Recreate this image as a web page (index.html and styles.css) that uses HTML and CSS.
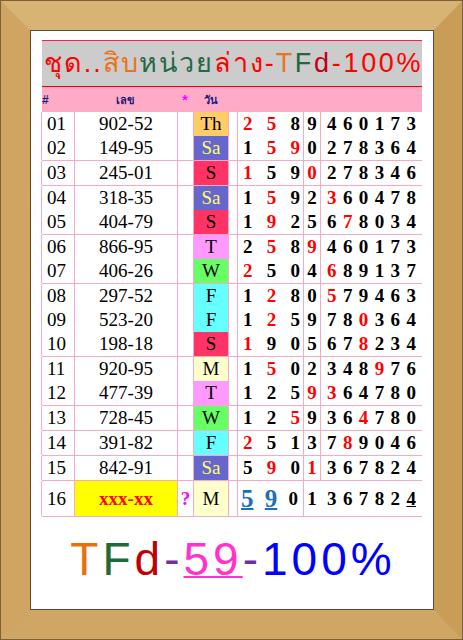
FILE: index.html
```html
<!DOCTYPE html>
<html lang="th">
<head>
<meta charset="utf-8">
<title>TFd-100%</title>
<link rel="stylesheet" href="styles.css">
</head>
<body>
<div class="frame">
  <div class="wood">
    <div class="paper">
      <div class="sheet">
        <div class="title"><span class="thai t-red">ชุด..</span><span class="thai t-orange">สิบ</span><span class="thai t-green">หน่วย</span><span class="thai t-red">ล่าง-</span><span class="t-orange">T</span><span class="t-dgreen">F</span><span class="t-dred">d</span><span class="t-red">-100</span><span class="t-red last">%</span></div>
        <div class="head">
          <span class="h-hash">#</span>
          <span class="h-num">เลข</span>
          <span class="h-star">*</span>
          <span class="h-day">วัน</span>
        </div>

        <div class="grp">
          <div class="row"><div class="c n">01</div><div class="c num">902-52</div><div class="c star"></div><div class="c day th">Th</div><div class="c gap"></div><div class="c d1"><b class="r">2</b><b class="r">5</b><b>8</b></div><div class="c d2"><b>9</b></div><div class="c d3"><b>4</b><b>6</b><b>0</b><b>1</b><b>7</b><b>3</b></div></div>
          <div class="row"><div class="c n">02</div><div class="c num">149-95</div><div class="c star"></div><div class="c day sa">Sa</div><div class="c gap"></div><div class="c d1"><b>1</b><b class="r">5</b><b class="r">9</b></div><div class="c d2"><b>0</b></div><div class="c d3"><b>2</b><b>7</b><b>8</b><b>3</b><b>6</b><b>4</b></div></div>
        </div>
        <div class="grp">
          <div class="row"><div class="c n">03</div><div class="c num">245-01</div><div class="c star"></div><div class="c day su">S</div><div class="c gap"></div><div class="c d1"><b class="r">1</b><b>5</b><b>9</b></div><div class="c d2"><b class="r">0</b></div><div class="c d3"><b>2</b><b>7</b><b>8</b><b>3</b><b>4</b><b>6</b></div></div>
        </div>
        <div class="grp">
          <div class="row"><div class="c n">04</div><div class="c num">318-35</div><div class="c star"></div><div class="c day sa">Sa</div><div class="c gap"></div><div class="c d1"><b>1</b><b class="r">5</b><b>9</b></div><div class="c d2"><b>2</b></div><div class="c d3"><b class="r">3</b><b>6</b><b>0</b><b>4</b><b>7</b><b>8</b></div></div>
          <div class="row"><div class="c n">05</div><div class="c num">404-79</div><div class="c star"></div><div class="c day su">S</div><div class="c gap"></div><div class="c d1"><b>1</b><b class="r">9</b><b>2</b></div><div class="c d2"><b>5</b></div><div class="c d3"><b>6</b><b class="r">7</b><b>8</b><b>0</b><b>3</b><b>4</b></div></div>
        </div>
        <div class="grp">
          <div class="row"><div class="c n">06</div><div class="c num">866-95</div><div class="c star"></div><div class="c day tu">T</div><div class="c gap"></div><div class="c d1"><b>2</b><b class="r">5</b><b>8</b></div><div class="c d2"><b class="r">9</b></div><div class="c d3"><b>4</b><b>6</b><b>0</b><b>1</b><b>7</b><b>3</b></div></div>
          <div class="row"><div class="c n">07</div><div class="c num">406-26</div><div class="c star"></div><div class="c day we">W</div><div class="c gap"></div><div class="c d1"><b class="r">2</b><b>5</b><b>0</b></div><div class="c d2"><b>4</b></div><div class="c d3"><b class="r">6</b><b>8</b><b>9</b><b>1</b><b>3</b><b>7</b></div></div>
        </div>
        <div class="grp">
          <div class="row"><div class="c n">08</div><div class="c num">297-52</div><div class="c star"></div><div class="c day fr">F</div><div class="c gap"></div><div class="c d1"><b>1</b><b class="r">2</b><b>8</b></div><div class="c d2"><b>0</b></div><div class="c d3"><b class="r">5</b><b>7</b><b>9</b><b>4</b><b>6</b><b>3</b></div></div>
          <div class="row"><div class="c n">09</div><div class="c num">523-20</div><div class="c star"></div><div class="c day fr">F</div><div class="c gap"></div><div class="c d1"><b>1</b><b class="r">2</b><b>5</b></div><div class="c d2"><b>9</b></div><div class="c d3"><b>7</b><b>8</b><b class="r">0</b><b>3</b><b>6</b><b>4</b></div></div>
          <div class="row"><div class="c n">10</div><div class="c num">198-18</div><div class="c star"></div><div class="c day su">S</div><div class="c gap"></div><div class="c d1"><b class="r">1</b><b>9</b><b>0</b></div><div class="c d2"><b>5</b></div><div class="c d3"><b>6</b><b>7</b><b class="r">8</b><b>2</b><b>3</b><b>4</b></div></div>
        </div>
        <div class="grp">
          <div class="row"><div class="c n">11</div><div class="c num">920-95</div><div class="c star"></div><div class="c day mo">M</div><div class="c gap"></div><div class="c d1"><b>1</b><b class="r">5</b><b>0</b></div><div class="c d2"><b>2</b></div><div class="c d3"><b>3</b><b>4</b><b>8</b><b class="r">9</b><b>7</b><b>6</b></div></div>
          <div class="row"><div class="c n">12</div><div class="c num">477-39</div><div class="c star"></div><div class="c day tu">T</div><div class="c gap"></div><div class="c d1"><b>1</b><b>2</b><b>5</b></div><div class="c d2"><b class="r">9</b></div><div class="c d3"><b class="r">3</b><b>6</b><b>4</b><b>7</b><b>8</b><b>0</b></div></div>
        </div>
        <div class="grp">
          <div class="row"><div class="c n">13</div><div class="c num">728-45</div><div class="c star"></div><div class="c day we">W</div><div class="c gap"></div><div class="c d1"><b>1</b><b>2</b><b class="r">5</b></div><div class="c d2"><b>9</b></div><div class="c d3"><b>3</b><b>6</b><b class="r">4</b><b>7</b><b>8</b><b>0</b></div></div>
        </div>
        <div class="grp">
          <div class="row"><div class="c n">14</div><div class="c num">391-82</div><div class="c star"></div><div class="c day fr">F</div><div class="c gap"></div><div class="c d1"><b class="r">2</b><b>5</b><b>1</b></div><div class="c d2"><b>3</b></div><div class="c d3"><b>7</b><b class="r">8</b><b>9</b><b>0</b><b>4</b><b>6</b></div></div>
        </div>
        <div class="grp">
          <div class="row"><div class="c n">15</div><div class="c num">842-91</div><div class="c star"></div><div class="c day sa">Sa</div><div class="c gap"></div><div class="c d1"><b>5</b><b class="r">9</b><b>0</b></div><div class="c d2"><b class="r">1</b></div><div class="c d3"><b>3</b><b>6</b><b>7</b><b>8</b><b>2</b><b>4</b></div></div>
        </div>
        <div class="grp">
          <div class="row big"><div class="c n">16</div><div class="c num yel">xxx-xx</div><div class="c star q">?</div><div class="c day mo">M</div><div class="c gap"></div><div class="c d1"><b class="blue">5</b><b class="blue">9</b><b>0</b></div><div class="c d2"><b>1</b></div><div class="c d3 nob"><b>3</b><b>6</b><b>7</b><b>8</b><b>2</b><b class="ul">4</b></div></div>
        </div>
      </div>
      <div class="footer"><span class="f-orange">T</span><span class="f-green">F</span><span class="f-red">d</span><span class="f-purple">-</span><span class="f-pink">59</span><span class="f-purple">-</span><span class="f-blue">100%</span></div>
    </div>
  </div>
</div>
</body>
</html>
```

FILE: styles.css
```css
html, body {
  margin: 0;
  padding: 0;
}
body {
  width: 463px;
  height: 640px;
  overflow: hidden;
  background: #c9a162;
}
.frame {
  box-sizing: border-box;
  width: 463px;
  height: 640px;
  border: 1px solid #7d6136;
}
.wood {
  box-sizing: border-box;
  height: 100%;
  border-style: solid;
  border-width: 29px 28px 29px 29px;
  border-color: #d8b474 #c99c58 #cfa663 #d0a462;
}
.paper {
  box-sizing: border-box;
  height: 100%;
  border: 1px solid #5e4b31;
  background: #ffffff;
  padding: 9px 9px 0 11px;
  display: flex;
  flex-direction: column;
}
.sheet {
  width: 380px;
}
.title {
  box-sizing: border-box;
  height: 47px;
  background: #cccccc;
  border-top: 1px solid #ff1f3f;
  border-bottom: 1px solid #ee0000;
  font-family: "Liberation Sans", "Noto Sans", sans-serif;
  font-size: 27px;
  letter-spacing: 2.7px;
  line-height: 44px;
  white-space: nowrap;
  padding-left: 2px;
}
.title .thai { letter-spacing: 1.9px; }
.title .last { letter-spacing: 0; }
.t-red { color: #ff0000; }
.t-orange { color: #e8741c; }
.t-green { color: #1f6b45; }
.t-dgreen { color: #21683a; }
.t-dred { color: #c00018; }
.head {
  height: 25px;
  background: #ffabc8;
  display: grid;
  grid-template-columns: 32px 103px 16px 35px;
  align-items: center;
  font-family: "Liberation Sans", "Noto Sans", sans-serif;
  font-weight: bold;
  font-size: 11px;
  color: #1a1a7a;
}
.h-hash { font-size: 12px; }
.h-num, .h-star, .h-day { text-align: center; }
.h-star { color: #ff00ff; font-size: 14px; }
.grp {
  border-bottom: 1px solid #f7a9c6;
}
.row {
  box-sizing: border-box;
  display: grid;
  grid-template-columns: 32px 103px 16px 35px 9px 66px 17px 102px;
  height: 24px;
  border-left: 1px solid #f7a9c6;
  margin-left: -1px;
  font-family: "Liberation Serif", serif;
  font-size: 19px;
  line-height: 24px;
  color: #000;
}
.row.big {
  height: 35px;
  line-height: 35px;
}
.c {
  box-sizing: border-box;
  border-left: 1px solid #f7a9c6;
  text-align: center;
}
.c.n {
  border-left: none;
  text-align: left;
  padding-left: 5px;
}
.c.nob {
  border-left-color: transparent;
}
.yel {
  background: #ffff00;
  color: #ff0000;
  font-weight: bold;
}
.q {
  color: #ff00ff;
  font-weight: bold;
}
.day.th { background: #ffcc66; }
.day.sa { background: #6666cc; color: #ffff66; }
.day.su { background: #ff3366; }
.day.tu { background: #ff99ff; }
.day.we { background: #66ff66; }
.day.fr { background: #66ffff; }
.day.mo { background: #ffffcc; }
.d1, .d3 {
  display: flex;
  justify-content: space-between;
  font-weight: bold;
}
.d1 {
  padding: 0 3px 0 5px;
}
.d2 {
  font-weight: bold;
}
.d3 {
  padding: 0 6px 0 6px;
}
.r { color: #ff0000; }
.blue {
  color: #1b6fbd;
  font-size: 25px;
  text-decoration: underline;
  text-decoration-thickness: 2px;
}
.big .d1 {
  padding: 0 5px 0 3px;
}
.ul {
  text-decoration: underline;
}
.footer {
  font-family: "Liberation Sans", sans-serif;
  font-size: 46px;
  letter-spacing: 4px;
  text-align: center;
  margin-top: 17px;
  line-height: 50px;
}
.f-orange { color: #e8700e; }
.f-green { color: #1f6b35; }
.f-red { color: #c00000; }
.f-purple { color: #7030a0; }
.f-pink { color: #ff33cc; text-decoration: underline; text-decoration-thickness: 2px; }
.f-blue { color: #0000ff; }
```
